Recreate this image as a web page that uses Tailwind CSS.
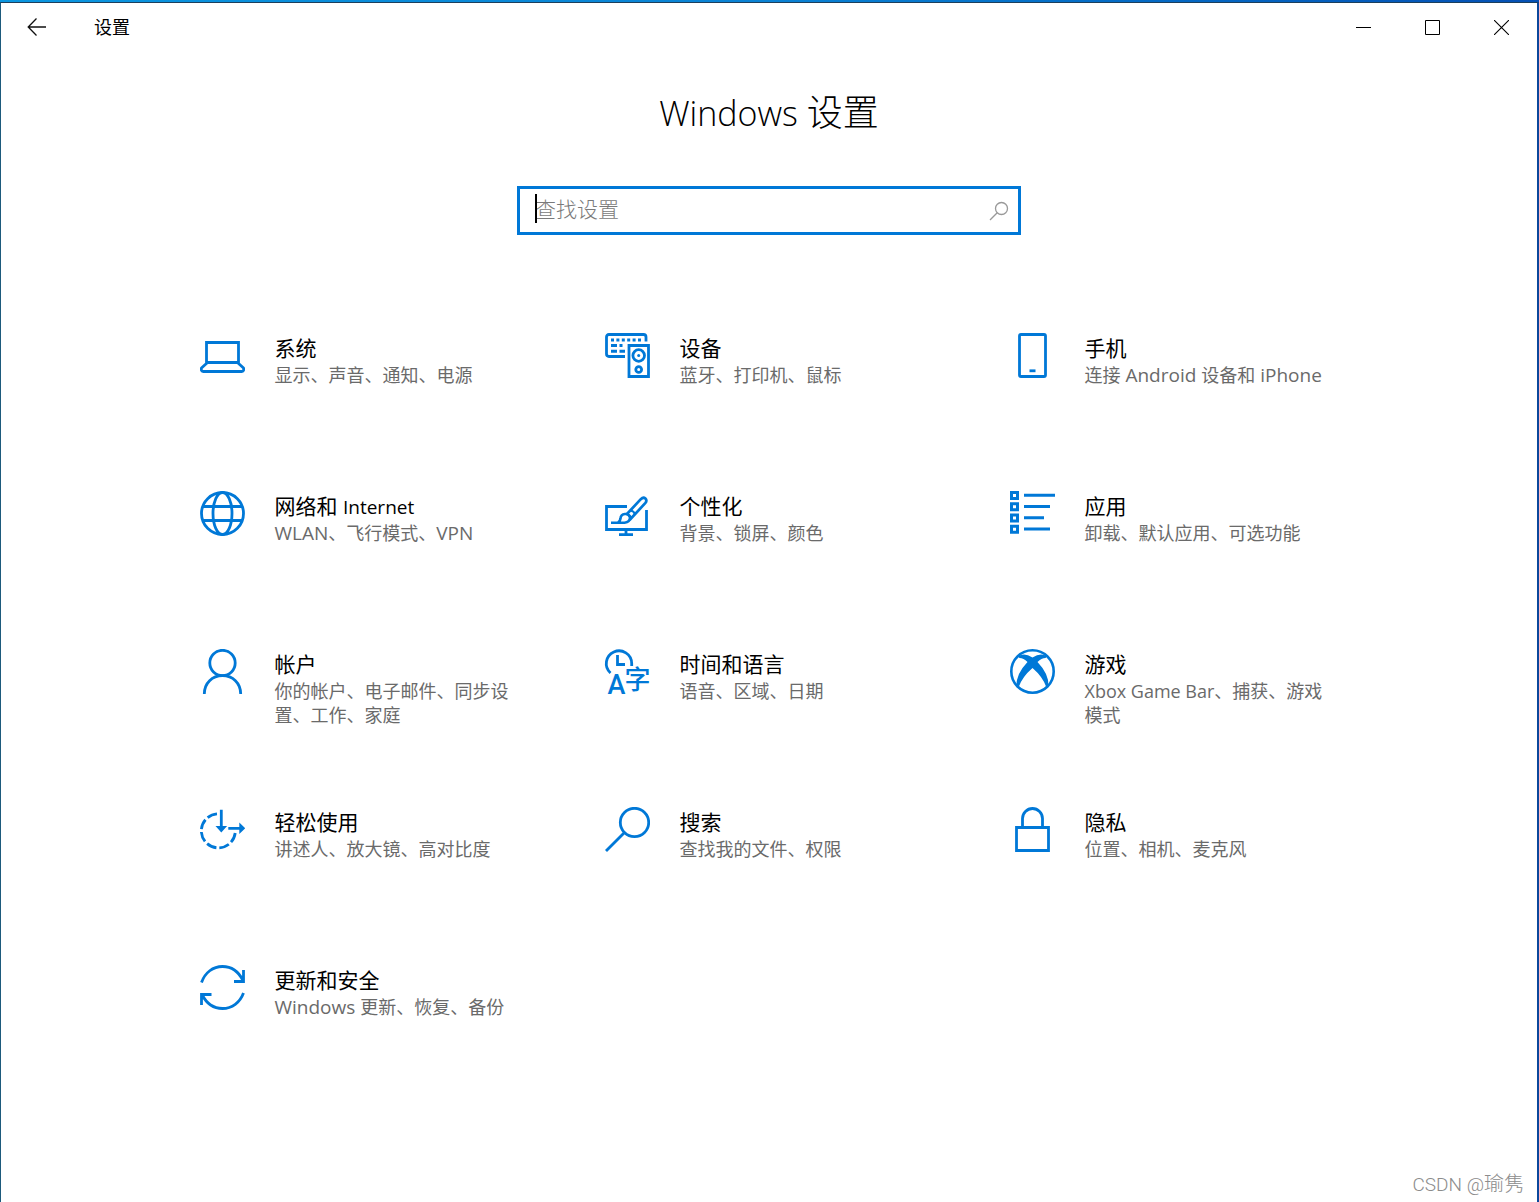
<!DOCTYPE html>
<html lang="zh-CN">
<head>
<meta charset="utf-8">
<meta name="viewport" content="width=device-width, initial-scale=1">
<title>设置</title>
<script src="https://cdn.jsdelivr.net/npm/@tailwindcss/browser@4"></script>
</head>
<body class="relative flex min-h-screen flex-col bg-white font-['Open_Sans','Noto_Sans_CJK_SC',sans-serif] text-black">
<div class="h-[2px] bg-linear-to-r from-[#0a96e0] via-[#0a82d4] to-[#0550b4]"></div>
<div class="flex grow flex-col border-t border-r-2 border-l border-t-[#1c3f5c] border-r-[#0b489c] border-l-[#1d5a7c]">
  <header class="flex h-12 items-center justify-between pr-px">
    <div class="flex items-center">
      <button type="button" aria-label="返回" class="flex h-12 w-18 items-center justify-center">
        <svg width="20" height="18" viewBox="0 0 20 18" fill="none" stroke="#111" stroke-width="1.3"><path d="M9.5 .5 1.2 9l8.300 8.500M1.200 9H19"/></svg>
      </button>
      <span class="ml-[21px] text-[18px] leading-6">设置</span>
    </div>
    <div class="flex">
      <button type="button" aria-label="最小化" class="flex h-12 w-[69px] items-center justify-center">
        <svg width="15" height="15" fill="none" stroke="#000"><path d="M0 7.500h15"/></svg>
      </button>
      <button type="button" aria-label="最大化" class="flex h-12 w-[69px] items-center justify-center">
        <svg width="15" height="15" fill="none" stroke="#000"><path d="M.5 .5h14v14H.5z"/></svg>
      </button>
      <button type="button" aria-label="关闭" class="flex h-12 w-[69px] items-center justify-center">
        <svg width="15" height="15" fill="none" stroke="#000" stroke-width="1.100"><path d="M0 0l15 15M15 0 0 15"/></svg>
      </button>
    </div>
  </header>

  <main class="flex flex-col items-center">
    <h1 class="mt-[38px] text-[36px] leading-12 font-light"><span class="text-[34px] leading-none">Windows </span>设置</h1>
    <div class="relative mt-[49px] flex h-[49px] w-[504px] items-center border-3 border-[#0078d7] pr-2">
      <input type="text" aria-label="查找设置" placeholder="查找设置" class="h-full grow pb-1 pl-[15px] text-[21px] font-light caret-transparent outline-none placeholder:text-[#7a7a7a]">
      <span class="absolute top-[5px] left-[15px] h-[29px] w-[2px] bg-black"></span>
      <svg class="shrink-0" width="22" height="22" viewBox="0 0 22 22" fill="none" stroke="#999" stroke-width="1.300"><circle cx="13.500" cy="8.500" r="6"/><path d="M9.200 12.800 2 20"/></svg>
    </div>

    <nav aria-label="设置类别" class="mt-[98px] grid grid-cols-[repeat(3,405px)] auto-rows-[158px]">
      <a href="#system" class="flex items-start gap-[30px] pl-[38px]">
        <svg class="shrink-0" width="45" height="45" fill="none" stroke="#0078d7" stroke-width="2.800"><path d="M6.500 30V9.500h32V30M6.500 29.500h32M7 30l-5.500 5q-.8 3.500 2 3.500h38q2.800 0 2-3.500L38 30"/></svg>
        <div class="w-[248px] pt-px"><h2 class="text-[21px] leading-7">系统</h2><p class="mt-px text-[18px] leading-6 text-[#6a6a6a]">显示、声音、通知、电源</p></div>
      </a>
      <a href="#devices" class="flex items-start gap-[30px] pl-[38px]">
        <svg class="shrink-0" width="45" height="45" fill="none" stroke="#0078d7" stroke-width="2.800"><path d="M20 23.500H4Q1.500 23.500 1.500 21V4Q1.500 1.500 4 1.500H38.500Q41 1.500 41 4V8.500"/><path stroke-width="3" stroke-dasharray="3 2.400" d="M6 7h31"/><path stroke-width="3" d="M6 12.500h6m2.500 0h3M6 18.300h6m2.500 0H20"/><path d="M24 12.500h19.500v31H24z"/><circle cx="33.700" cy="22.500" r="5.800"/><circle cx="33.700" cy="36.500" r="2.900"/><circle cx="33.700" cy="22.500" r="1.500" fill="#0078d7" stroke="none"/></svg>
        <div class="w-[248px] pt-px"><h2 class="text-[21px] leading-7">设备</h2><p class="mt-px text-[18px] leading-6 text-[#6a6a6a]">蓝牙、打印机、鼠标</p></div>
      </a>
      <a href="#phone" class="flex items-start gap-[30px] pl-[38px]">
        <svg class="shrink-0" width="45" height="45" fill="none" stroke="#0078d7" stroke-width="2.800"><rect x="9.500" y="1.500" width="26" height="42" rx="1.500"/><path d="M19.500 37.800h6"/></svg>
        <div class="w-[248px] pt-px"><h2 class="text-[21px] leading-7">手机</h2><p class="mt-px text-[18px] leading-6 text-[#6a6a6a]">连接<span class="text-[19px] leading-none"> Android </span>设备和<span class="text-[19px] leading-none"> iPhone</span></p></div>
      </a>

      <a href="#network" class="flex items-start gap-[30px] pl-[38px]">
        <svg class="shrink-0" width="45" height="45" fill="none" stroke="#0078d7" stroke-width="2.800"><circle cx="22.500" cy="22.500" r="21"/><ellipse cx="22.500" cy="22.500" rx="9.500" ry="21"/><path d="M3 15.500h39M3 29.500h39"/></svg>
        <div class="w-[248px] pt-px"><h2 class="text-[21px] leading-7">网络和 <span class="text-[19px] leading-none">Internet</span></h2><p class="mt-px text-[18px] leading-6 text-[#6a6a6a]"><span class="text-[19px] leading-none">WLAN</span>、飞行模式、<span class="text-[19px] leading-none">VPN</span></p></div>
      </a>
      <a href="#personalization" class="flex items-start gap-[30px] pl-[38px]">
        <svg class="shrink-0" width="45" height="45" fill="none" stroke="#0078d7" stroke-width="2.800"><path d="M22 15.500H1.500v23h40V19M14 43.700h14M21 39v4"/><path fill="#fff" stroke-width="2.700" d="M21.500 23.500 35.800 8.200q2.500-2.500 4.600-.7 2 2.200-.2 4.700L26 27.500Q25 24 21.500 23.500z"/><path d="M25.500 19.500q3.500.5 4.500 4" stroke-width="2"/><path fill="#fff" stroke-width="2.600" d="M6 31.700h13.500q5.500-.7 5.500-5.200-1-4-5-3.500-4.300.5-4.500 4.500-.3 3-2.500 4"/></svg>
        <div class="w-[248px] pt-px"><h2 class="text-[21px] leading-7">个性化</h2><p class="mt-px text-[18px] leading-6 text-[#6a6a6a]">背景、锁屏、颜色</p></div>
      </a>
      <a href="#apps" class="flex items-start gap-[30px] pl-[38px]">
        <svg class="shrink-0" width="45" height="45" fill="none" stroke="#0078d7" stroke-width="3"><path d="M1.500 1.500H7.500V7.500H1.500zM1.500 12.700H7.500V18.700H1.500zM1.500 24H7.500V30H1.500zM1.500 35.200H7.500V41.200H1.500zM14 4.200h31M14 15.500h26M14 26.800h20M14 38h26"/></svg>
        <div class="w-[248px] pt-px"><h2 class="text-[21px] leading-7">应用</h2><p class="mt-px text-[18px] leading-6 text-[#6a6a6a]">卸载、默认应用、可选功能</p></div>
      </a>

      <a href="#accounts" class="flex items-start gap-[30px] pl-[38px]">
        <svg class="shrink-0" width="45" height="45" fill="none" stroke="#0078d7" stroke-width="2.800"><circle cx="22.500" cy="14" r="12.700"/><path d="M4.300 45c0-11 8-18.300 18.200-18.300S40.700 34 40.700 45"/></svg>
        <div class="w-[248px] pt-px"><h2 class="text-[21px] leading-7">帐户</h2><p class="mt-px text-[18px] leading-6 text-[#6a6a6a]">你的帐户、电子邮件、同步设置、工作、家庭</p></div>
      </a>
      <a href="#time" class="flex items-start gap-[30px] pl-[38px]">
        <svg class="shrink-0 overflow-visible" width="45" height="45" fill="none" stroke="#0078d7" stroke-width="2.800"><path d="M5.500 24A12.700 12.700 0 1 1 26.700 14.500V17M12.500 6v9.500H20"/><g fill="#0078d7" stroke="none"><text x="2.500" y="45" font-size="27" font-weight="500" font-family="Roboto, sans-serif">A</text><text x="19.500" y="40" font-size="26" font-weight="500" font-family="Noto Sans CJK SC, sans-serif">字</text></g></svg>
        <div class="w-[248px] pt-px"><h2 class="text-[21px] leading-7">时间和语言</h2><p class="mt-px text-[18px] leading-6 text-[#6a6a6a]">语音、区域、日期</p></div>
      </a>
      <a href="#gaming" class="flex items-start gap-[30px] pl-[38px]">
        <svg class="shrink-0" width="45" height="45" fill="none" stroke="#0078d7" stroke-width="2.600"><circle cx="22.500" cy="22.500" r="21.200"/><path fill="#0078d7" stroke="none" d="M8 7.500Q14 3 22.500 8.500 31 3 37 7.500L35.500 9Q31.500 9 27.500 13 39 25 38.500 37L36.500 38.500Q33 28 22.500 19 12 28 8.500 38.500L6.500 37Q6 25 17.500 13 13.500 9 9.500 9Z"/></svg>
        <div class="w-[248px] pt-px"><h2 class="text-[21px] leading-7">游戏</h2><p class="mt-px text-[18px] leading-6 text-[#6a6a6a]">Xbox Game Bar、捕获、游戏模式</p></div>
      </a>

      <a href="#ease" class="flex items-start gap-[30px] pl-[38px]">
        <svg class="shrink-0" width="45" height="45" fill="none" stroke="#0078d7" stroke-width="2.800"><path stroke-dasharray="10.200 3" d="M17 6.900A17 17 0 1 0 35.200 26"/><path d="M21.300 2.700v17M28.300 21.300h12"/><path fill="#0078d7" stroke="none" d="M15.500 19h11.600l-5.800 6.500zM39.300 15.500l6 5.800-6 5.800z"/></svg>
        <div class="w-[248px] pt-px"><h2 class="text-[21px] leading-7">轻松使用</h2><p class="mt-px text-[18px] leading-6 text-[#6a6a6a]">讲述人、放大镜、高对比度</p></div>
      </a>
      <a href="#search" class="flex items-start gap-[30px] pl-[38px]">
        <svg class="shrink-0" width="45" height="45" fill="none" stroke="#0078d7" stroke-width="2.800"><circle cx="29.500" cy="15.500" r="14.200"/><path d="M19.500 25.500 1 44"/></svg>
        <div class="w-[248px] pt-px"><h2 class="text-[21px] leading-7">搜索</h2><p class="mt-px text-[18px] leading-6 text-[#6a6a6a]">查找我的文件、权限</p></div>
      </a>
      <a href="#privacy" class="flex items-start gap-[30px] pl-[38px]">
        <svg class="shrink-0" width="45" height="45" fill="none" stroke="#0078d7" stroke-width="2.800"><path d="M6.500 20.500h32v23h-32zM12.500 20v-8.500a10 10 0 0 1 20 0V20"/></svg>
        <div class="w-[248px] pt-px"><h2 class="text-[21px] leading-7">隐私</h2><p class="mt-px text-[18px] leading-6 text-[#6a6a6a]">位置、相机、麦克风</p></div>
      </a>

      <a href="#update" class="flex items-start gap-[30px] pl-[38px]">
        <svg class="shrink-0" width="45" height="45" fill="none" stroke="#0078d7" stroke-width="2.800"><path d="M1.500 17.500C5 7.500 13 1.500 22.500 1.500c9 0 16 5 20.500 14M43.500 5v11.500H34M43.500 28C40 37.500 32 43.500 22.500 43.500c-9 0-16-5-20.500-14M1.500 40V29.500H11.500"/></svg>
        <div class="w-[248px] pt-px"><h2 class="text-[21px] leading-7">更新和安全</h2><p class="mt-px text-[18px] leading-6 text-[#6a6a6a]"><span class="text-[19px] leading-none">Windows </span>更新、恢复、备份</p></div>
      </a>
    </nav>
  </main>
</div>
<div class="absolute right-[15px] bottom-[6px] font-['Roboto','Noto_Sans_CJK_SC',sans-serif] text-[20px] leading-6 font-light text-[#8c8c8c]"><span class="text-[19px] leading-none">CSDN @</span>瑜隽</div>
</body>
</html>
